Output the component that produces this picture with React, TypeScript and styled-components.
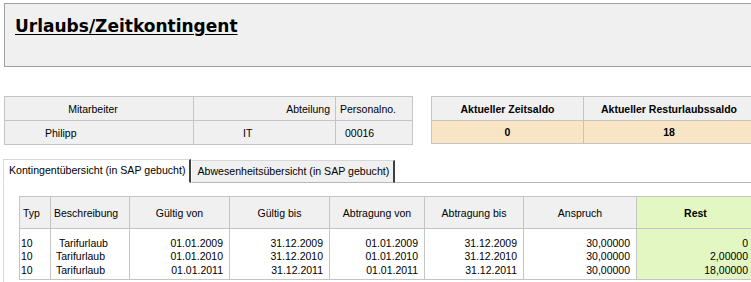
import React from 'react';
import { styled, createGlobalStyle } from 'styled-components';

const GlobalStyle = createGlobalStyle`
  html, body {
    margin: 0;
    padding: 0;
    background: #ffffff;
    overflow: hidden;
  }
  body {
    font-family: 'Liberation Sans', Arial, sans-serif;
    font-size: 10.5px;
    color: #000000;
  }
`;

type Row = {
  typ: string;
  text: string;
  von: string;
  bis: string;
  abVon: string;
  abBis: string;
  anspruch: string;
  rest: string;
};

const rows: Row[] = [
  { typ: '10', text: '\u00a0Tarifurlaub', von: '01.01.2009', bis: '31.12.2009', abVon: '01.01.2009', abBis: '31.12.2009', anspruch: '30,00000', rest: '0' },
  { typ: '10', text: 'Tarifurlaub', von: '01.01.2010', bis: '31.12.2010', abVon: '01.01.2010', abBis: '31.12.2010', anspruch: '30,00000', rest: '2,00000' },
  { typ: '10', text: 'Tarifurlaub', von: '01.01.2011', bis: '31.12.2011', abVon: '01.01.2011', abBis: '31.12.2011', anspruch: '30,00000', rest: '18,00000' },
];

const lines = (key: keyof Row) =>
  rows.map((r, i) => <Line key={i}>{r[key]}</Line>);

const App = () => {
  return (
    <Page>
      <GlobalStyle />
      <TitleBox>
        <Title>Urlaubs/Zeitkontingent</Title>
      </TitleBox>

      <InfoRow>
        <EmployeeTable>
          <colgroup>
            <col style={{ width: 189 }} />
            <col style={{ width: 142 }} />
            <col style={{ width: 77 }} />
          </colgroup>
          <tbody>
            <tr>
              <InfoCell $align='center' $right={16}>Mitarbeiter</InfoCell>
              <InfoCell $align='right' $right={5}>Abteilung</InfoCell>
              <InfoCell $align='left'>Personalno.</InfoCell>
            </tr>
            <tr>
              <InfoCell $align='left' $indent={40}>Philipp</InfoCell>
              <InfoCell $align='left' $indent={49}>IT</InfoCell>
              <InfoCell $align='left' $indent={9}>00016</InfoCell>
            </tr>
          </tbody>
        </EmployeeTable>

        <SaldoTable>
          <colgroup>
            <col style={{ width: 152 }} />
            <col style={{ width: 171 }} />
          </colgroup>
          <tbody>
            <tr>
              <SaldoHead>Aktueller Zeitsaldo</SaldoHead>
              <SaldoHead>Aktueller Resturlaubssaldo</SaldoHead>
            </tr>
            <tr>
              <SaldoValue>0</SaldoValue>
              <SaldoValue>18</SaldoValue>
            </tr>
          </tbody>
        </SaldoTable>
      </InfoRow>

      <Tabs>
        <TabList>
          <Tab $active>Kontingentübersicht (in SAP gebucht)</Tab>
          <Tab>Abwesenheitsübersicht (in SAP gebucht)</Tab>
          <TabFiller />
        </TabList>
        <Panel>
          <DataTable>
            <colgroup>
              <col style={{ width: 31 }} />
              <col style={{ width: 79 }} />
              <col style={{ width: 100 }} />
              <col style={{ width: 100 }} />
              <col style={{ width: 95 }} />
              <col style={{ width: 99 }} />
              <col style={{ width: 113 }} />
              <col style={{ width: 118 }} />
            </colgroup>
            <thead>
              <tr>
                <HeadCell $align='left'>Typ</HeadCell>
                <HeadCell $align='left'>Beschreibung</HeadCell>
                <HeadCell>Gültig von</HeadCell>
                <HeadCell>Gültig bis</HeadCell>
                <HeadCell>Abtragung von</HeadCell>
                <HeadCell>Abtragung bis</HeadCell>
                <HeadCell>Anspruch</HeadCell>
                <HeadCell $rest>Rest</HeadCell>
              </tr>
            </thead>
            <tbody>
              <tr>
                <BodyCell $align='left' $pad={1}>{lines('typ')}</BodyCell>
                <BodyCell $align='left' $pad={5}>{lines('text')}</BodyCell>
                <BodyCell>{lines('von')}</BodyCell>
                <BodyCell>{lines('bis')}</BodyCell>
                <BodyCell>{lines('abVon')}</BodyCell>
                <BodyCell>{lines('abBis')}</BodyCell>
                <BodyCell>{lines('anspruch')}</BodyCell>
                <BodyCell $rest>{lines('rest')}</BodyCell>
              </tr>
            </tbody>
          </DataTable>
        </Panel>
      </Tabs>
    </Page>
  );
};

export default App;

const Page = styled.div`
  width: 760px;
  padding-top: 3px;
`;

const TitleBox = styled.div`
  margin-left: 4px;
  height: 62px;
  border: 1px solid #a0a0a0;
  border-right: none;
  background: #f0f0f0;
  padding-left: 10px;
  box-sizing: content-box;
`;

const Title = styled.h1`
  margin: 0;
  padding-top: 12px;
  font-family: 'DejaVu Sans', Verdana, sans-serif;
  font-size: 17px;
  font-weight: bold;
  text-decoration: underline;
  text-underline-offset: 2px;
  line-height: 20px;
`;

const InfoRow = styled.div`
  display: flex;
  align-items: flex-start;
  margin-top: 29px;
  margin-left: 4px;
  gap: 18px;
`;

const EmployeeTable = styled.table`
  border-collapse: collapse;
  table-layout: fixed;
  width: 408px;
`;

const InfoCell = styled.td<{ $align: string; $indent?: number; $right?: number }>`
  height: 23px;
  padding: 0 ${(p) => p.$right ?? 0}px 0 ${(p) => p.$indent ?? 4}px;
  border: 1px solid #c4c4c4;
  background: #f0f0f0;
  text-align: ${(p) => p.$align};
  white-space: nowrap;
  font-size: 10.5px;
`;

const SaldoTable = styled.table`
  border-collapse: collapse;
  table-layout: fixed;
  width: 323px;
`;

const SaldoHead = styled.td`
  height: 23px;
  padding: 0;
  border: 1px solid #c4c4c4;
  background: #f0f0f0;
  text-align: center;
  font-weight: bold;
  white-space: nowrap;
`;

const SaldoValue = styled.td`
  height: 22px;
  padding: 0;
  border: 1px solid #c4c4c4;
  background: #f8e5c6;
  text-align: center;
  font-weight: bold;
`;

const Tabs = styled.div`
  margin-top: 15px;
  margin-left: 3px;
`;

const TabList = styled.div`
  display: flex;
  align-items: flex-end;
  height: 23px;
`;

const Tab = styled.div<{ $active?: boolean }>`
  height: ${(p) => (p.$active ? 22 : 21)}px;
  line-height: 21px;
  padding: 0 4px 0 5px;
  white-space: nowrap;
  font-size: 10.6px;
  background: ${(p) => (p.$active ? '#ffffff' : '#f0f0f0')};
  border-top: 1px solid #d8d8d8;
  border-left: 1px solid ${(p) => (p.$active ? '#d8d8d8' : '#ffffff')};
  border-right: 2px solid #404040;
  border-bottom: ${(p) => (p.$active ? '1px solid #ffffff' : '1px solid #b8b8b8')};
`;

const TabFiller = styled.div`
  flex: 1;
  border-bottom: 1px solid #b8b8b8;
`;

const Panel = styled.div`
  border-left: 1px solid #d8d8d8;
  padding: 13px 0 0 15px;
  height: 90px;
`;

const DataTable = styled.table`
  border-collapse: collapse;
  table-layout: fixed;
  width: 735px;
`;

const HeadCell = styled.th<{ $align?: string; $rest?: boolean }>`
  height: 31px;
  padding: 0 0 0 ${(p) => (p.$align === 'left' ? 3 : 0)}px;
  border: 1px solid #c4c4c4;
  background: ${(p) => (p.$rest ? '#e3f7c2' : '#f0f0f0')};
  text-align: ${(p) => p.$align ?? 'center'};
  font-weight: ${(p) => (p.$rest ? 'bold' : 'normal')};
  white-space: nowrap;
`;

const BodyCell = styled.td<{ $align?: string; $pad?: number; $rest?: boolean }>`
  height: 48px;
  padding: 0 ${(p) => (p.$align === 'left' ? 0 : 6)}px 2px ${(p) => p.$pad ?? 0}px;
  border: 1px solid #c4c4c4;
  background: ${(p) => (p.$rest ? '#e3f7c2' : '#ffffff')};
  text-align: ${(p) => p.$align ?? 'right'};
  vertical-align: bottom;
  white-space: nowrap;
`;

const Line = styled.div`
  line-height: 13.5px;
`;
